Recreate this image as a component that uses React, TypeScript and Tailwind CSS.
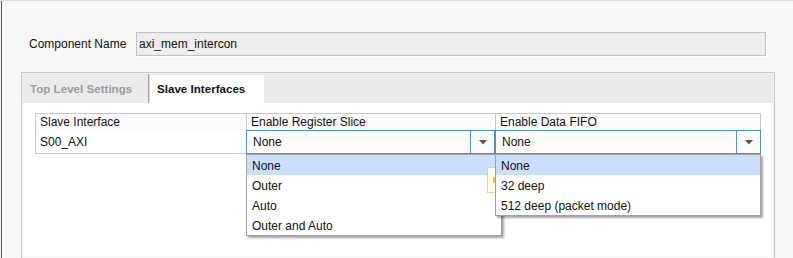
import { ReactNode } from "react";

function Arrow() {
  return (
    <svg width="8" height="5" viewBox="0 0 8 5" className="block">
      <path d="M0 0 H8 L4 4.5 Z" fill="#555" />
    </svg>
  );
}

function Combo({ value, className }: { value: string; className: string }) {
  return (
    <div className={`flex h-[24px] border border-[#4a92cf] bg-[#fcfcfc] ${className}`}>
      <div className="flex flex-1 items-center pl-[6px]">{value}</div>
      <div className="flex w-[24px] items-center justify-center border-l border-[#4a92cf]">
        <Arrow />
      </div>
    </div>
  );
}

function Popup({ items, className }: { items: string[]; className: string }) {
  return (
    <div
      className={`absolute top-[41px] border border-[#a2a2a2] bg-white shadow-[2px_2px_2px_rgba(0,0,0,0.35)] ${className}`}
    >
      {items.map((item, i) => (
        <div
          key={item}
          className={`flex h-[20px] items-center pl-[5px] pt-px ${i === 0 ? "bg-[#cadffc]" : ""}`}
        >
          {item}
        </div>
      ))}
    </div>
  );
}

function HeaderCell({ children, className }: { children: ReactNode; className: string }) {
  return <div className={`flex items-center pl-[4px] ${className}`}>{children}</div>;
}

export default function App() {
  return (
    <div className="flex h-[258px] w-[793px] overflow-hidden border-t border-[#dedede] bg-[#f7f7f7] font-['Liberation_Sans',Arial,sans-serif] text-[12px] text-[#111]">
      <div className="w-px bg-[#ededed]" />
      <div className="w-px bg-[#b5402e]" />
      <div className="flex flex-1 flex-col pl-[19px] pt-[31px]">
        <div className="flex h-[24px] items-center">
          <span className="w-[115px] pl-[8px]">Component Name</span>
          <div className="flex h-[24px] w-[630px] items-center border border-[#c2c2c2] bg-[#eeeeee] pl-[2px] shadow-[1px_1px_0_#ffffff]">
            axi_mem_intercon
          </div>
        </div>

        <div className="mt-[16px] flex w-[754px] flex-1 flex-col border-x border-t border-[#cacaca] bg-[#f2f2f2] p-px">
          <div className="flex h-[29px] bg-[#ebebeb]">
            <div className="flex w-[125px] items-center pl-[7px] pt-px text-[11.6px] font-bold text-[#9c9c9c]">
              Top Level Settings
            </div>
            <div className="w-px bg-[#a0a0a0]" />
            <div className="w-px bg-[#dcdcdc]" />
            <div className="mt-px flex w-[114px] items-center bg-white pl-[7px] text-[11.6px] font-bold text-[#111]">
              Slave Interfaces
            </div>
          </div>

          <div className="flex-1 bg-white pl-[12px] pt-[10px]">
            <div className="relative w-[726px]">
              <div className="flex h-[17px] border-x border-t border-[#c8c8c8] bg-[#fbfbfb]">
                <HeaderCell className="w-[210px] pl-[3px]">Slave Interface</HeaderCell>
                <HeaderCell className="w-[249px] border-l border-[#c8c8c8]">Enable Register Slice</HeaderCell>
                <HeaderCell className="flex-1 border-l border-[#c8c8c8]">Enable Data FIFO</HeaderCell>
              </div>
              <div className="flex h-[24px]">
                <div className="flex w-[211px] items-center border-b border-l border-[#c8c8c8] pl-[4px]">
                  S00_AXI
                </div>
                <Combo value="None" className="w-[249px]" />
                <Combo value="None" className="flex-1" />
              </div>

              <Popup
                items={["None", "Outer", "Auto", "Outer and Auto"]}
                className="left-[211px] w-[256px]"
              />
              <div className="absolute left-[452px] top-[54px] h-[26px] w-[16px] border border-[#d6d3b0] bg-[#ffffe3]">
                <div className="ml-[5px] mt-[9px] h-[6px] w-[2px] bg-[#f2c04a]" />
              </div>
              <Popup
                items={["None", "32 deep", "512 deep (packet mode)"]}
                className="left-[460px] w-[266px]"
              />
            </div>
          </div>
        </div>
      </div>
    </div>
  );
}
